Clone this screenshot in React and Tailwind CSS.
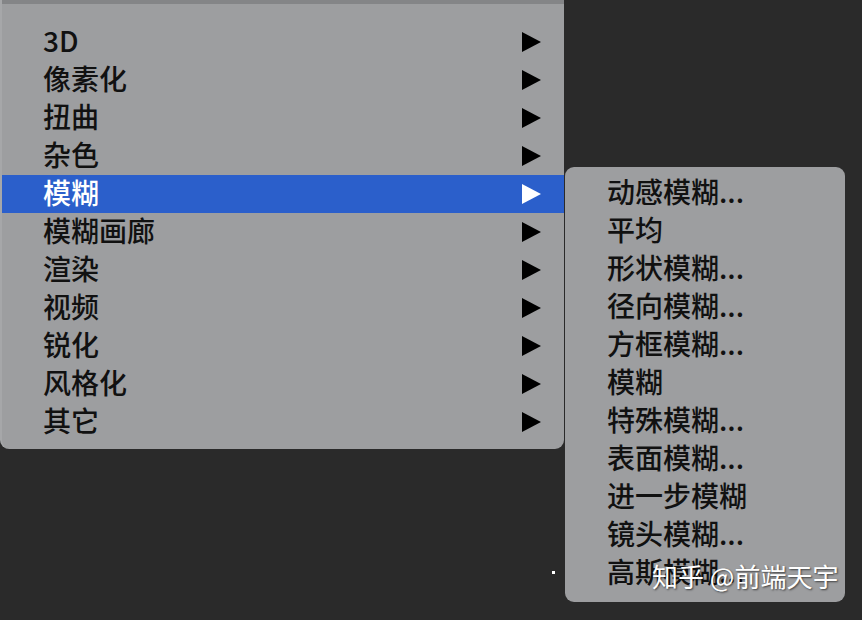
const mainItems = ['3D', '像素化', '扭曲', '杂色', '模糊', '模糊画廊', '渲染', '视频', '锐化', '风格化', '其它'];
const subItems = [
  '动感模糊...',
  '平均',
  '形状模糊...',
  '径向模糊...',
  '方框模糊...',
  '模糊',
  '特殊模糊...',
  '表面模糊...',
  '进一步模糊',
  '镜头模糊...',
  '高斯模糊...',
];

const font = { fontFamily: '"PingFang SC", "Noto Sans CJK SC", "Noto Sans", sans-serif' };

function Arrow({ white }) {
  return (
    <svg width="19" height="20" viewBox="0 0 19 20" className="shrink-0">
      <path d="M0 0 L19 10 L0 20 Z" fill={white ? '#ffffff' : '#000000'} />
    </svg>
  );
}

export default function App() {
  return (
    <div className="relative h-[620px] w-[862px] overflow-hidden bg-[#2a2a2a]" style={font}>
      {/* main menu */}
      <div className="w-[564px] rounded-b-[9px] border-l-2 border-[#a6a7a9] bg-[#9d9ea0]">
        <div className="h-[4px] bg-[#848587]" />
        <ul className="pb-[8px] pt-[19px]">
          {mainItems.map(item => {
            const active = item === '模糊';
            return (
              <li
                key={item}
                className={
                  'flex h-[38px] items-center justify-between pl-[41px] pr-[23px] text-[28px] font-medium leading-none ' +
                  (active ? 'bg-[#2b5fcb] text-white' : 'text-[#111111]')
                }
              >
                <span className="pb-[4px]">{item}</span>
                <Arrow white={active} />
              </li>
            );
          })}
        </ul>
      </div>

      {/* submenu */}
      <ul className="absolute left-[565px] top-[167px] w-[280px] rounded-[9px] bg-[#9d9ea0] pb-[10px] pt-[7px]">
        {subItems.map((item, i) => (
          <li key={i} className="flex h-[38px] items-center pb-[4px] pl-[42px] text-[28px] font-medium leading-none text-[#111111]">
            {item}
          </li>
        ))}
      </ul>

      {/* stray pixel */}
      <div className="absolute left-[552px] top-[571px] h-[3px] w-[3px] bg-white" />

      {/* watermark */}
      <div
        className="absolute left-[652px] top-[563px] text-[26px] leading-none text-white"
        style={{ textShadow: '1px 1px 2px rgba(0,0,0,0.6)' }}
      >
        知乎 @前端天宇
      </div>
    </div>
  );
}
